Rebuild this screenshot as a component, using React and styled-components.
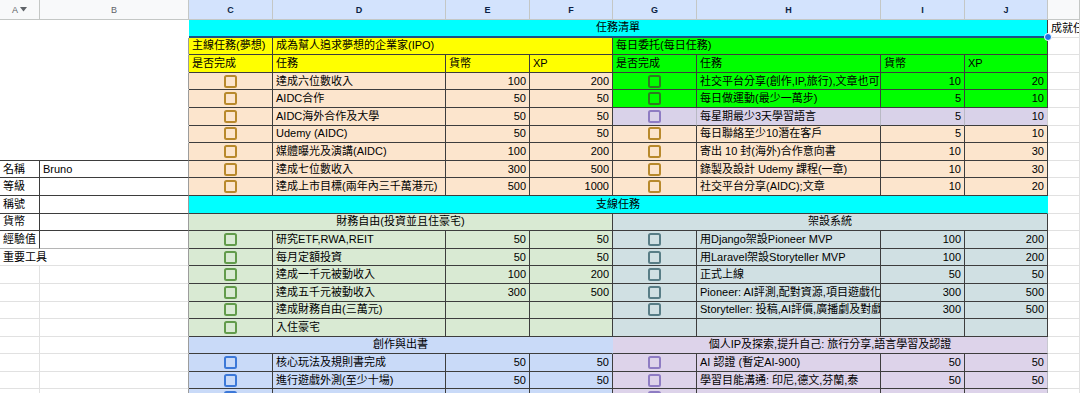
import React from 'react';
import styled, { createGlobalStyle } from 'styled-components';

const FONT = `"Liberation Sans", Arial, "Noto Sans CJK TC", sans-serif`;

const GlobalStyle = createGlobalStyle`
  html, body { margin: 0; padding: 0; background: #fff; overflow: hidden; }
  body { font-family: ${FONT}; }
`;

const CY = '#00ffff';
const YE = '#ffff00';
const GR = '#00ff00';
const PE = '#fce5cd';
const LV = '#d9d2e9';
const LG = '#d9ead3';
const TE = '#d0e0e3';
const BL = '#c9daf8';
const PU = '#ddd3ea';

const DK = '#3d3d3d';
const GL = '#e1e1e1';
const EDGE = '#9c9c9c';
const SOFT = '#b9b9c4';

const CK_PE = '#b8892c';
const CK_GR = '#2f7a22';
const CK_LV = '#8e7cc3';
const CK_LG = '#629b4b';
const CK_TE = '#587d86';
const CK_BL = '#3c78d8';
const CK_PU = '#8e7cc3';

const Sheet = styled.div`
  display: grid;
  grid-template-columns: 40px 149px 84px 173px 84px 83px 84px 184px 84px 83px 1fr;
  grid-template-rows: 20px;
  grid-auto-rows: 17.6px;
  width: 1080px;
  height: 393px;
  overflow: hidden;
  font-family: ${FONT};
  font-size: 11px;
  color: #000;
`;

const ColHead = styled.div`
  display: flex;
  align-items: center;
  justify-content: center;
  gap: 2px;
  box-sizing: border-box;
  background: ${p => (p.$sel ? '#d3e3fd' : '#f8f9fa')};
  color: ${p => (p.$sel ? '#0b1f45' : '#5f6368')};
  font-weight: ${p => (p.$sel ? 700 : 400)};
  font-size: 9px;
  border-right: 1px solid #c4c7c5;
  border-bottom: 1px solid #c4c7c5;
`;

const alignMap = { left: 'flex-start', center: 'center', right: 'flex-end' };

const Cell = styled.div`
  grid-column: span ${p => p.$span || 1};
  position: relative;
  box-sizing: border-box;
  display: flex;
  align-items: center;
  justify-content: ${p => alignMap[p.$align || 'left']};
  padding: 0 3px;
  background: ${p => p.$bg || '#fff'};
  border-right: ${p => (p.$sel ? 1 : 1)}px solid ${p => p.$br || 'transparent'};
  border-bottom: ${p => (p.$sel ? 2 : 1)}px solid ${p => p.$bb || 'transparent'};
  white-space: nowrap;
  overflow: ${p => (p.$sel ? 'visible' : 'hidden')};
  line-height: 1;
`;

const Check = styled.span`
  display: block;
  width: 13px;
  height: 13px;
  box-sizing: border-box;
  border: 2px solid ${p => p.$c};
  border-radius: 2.5px;
`;

const Handle = styled.span`
  position: absolute;
  right: -5px;
  bottom: -5px;
  width: 8px;
  height: 8px;
  border-radius: 50%;
  background: #1a73e8;
  border: 1px solid #fff;
  box-sizing: border-box;
  z-index: 2;
`;

const Caret = () => (
  <svg width="7" height="5" viewBox="0 0 7 5">
    <path d="M0 0 L7 0 L3.5 4.5 Z" fill="#5f6368" />
  </svg>
);

/* ---------- row builders ---------- */

const blank = r => ({
  s: 2,
  br: r === 1 ? 'transparent' : EDGE,
  bb: r === 8 ? DK : 'transparent',
});
const labelCells = (t, v = '', last = false) => [
  { t, br: DK, bb: last ? '#b5b5b5' : DK },
  { t: v, br: EDGE, bb: last ? '#b5b5b5' : DK },
];
const plainLeft = () => [
  { br: GL, bb: GL },
  { br: EDGE, bb: GL },
];
const kCell = (t = '') => ({ t, br: GL, bb: GL });

const task = (bg, chk, name, coin, xp, opts = {}) => {
  const b = opts.b || DK;
  return [
    { chk, bg, br: b, bb: opts.bb || DK, a: 'center' },
    { t: name, bg, br: b, bb: opts.bb || DK },
    { t: coin, bg, br: b, bb: opts.bb || DK, a: 'right' },
    { t: xp, bg, br: opts.last || b, bb: opts.bb || DK, a: 'right' },
  ];
};

const rows = [
  // 1
  [blank(1), { t: '任務清單', s: 8, bg: CY, a: 'center', sel: true, br: DK, bb: '#1d4f85' }, kCell('成就任務')],
  // 2
  [
    blank(2),
    { t: '主線任務(夢想)', bg: YE, br: DK, bb: DK },
    { t: '成為幫人追求夢想的企業家(IPO)', s: 3, bg: YE, br: DK, bb: DK },
    { t: '每日委托(每日任務)', s: 4, bg: GR, br: DK, bb: DK },
    kCell(),
  ],
  // 3
  [
    blank(3),
    { t: '是否完成', bg: YE, br: DK, bb: DK },
    { t: '任務', bg: YE, br: DK, bb: DK },
    { t: '貨幣', bg: YE, br: DK, bb: DK },
    { t: 'XP', bg: YE, br: DK, bb: DK },
    { t: '是否完成', bg: GR, br: DK, bb: DK },
    { t: '任務', bg: GR, br: DK, bb: DK },
    { t: '貨幣', bg: GR, br: DK, bb: DK },
    { t: 'XP', bg: GR, br: DK, bb: DK },
    kCell(),
  ],
  // 4
  [
    blank(4),
    ...task(PE, CK_PE, '達成六位數收入', '100', '200'),
    ...task(GR, CK_GR, '社交平台分享(創作,IP,旅行),文章也可', '10', '20'),
    kCell(),
  ],
  // 5
  [
    blank(5),
    ...task(PE, CK_PE, 'AIDC合作', '50', '50'),
    ...task(GR, CK_GR, '每日做運動(最少一萬步)', '5', '10'),
    kCell(),
  ],
  // 6
  [
    blank(6),
    ...task(PE, CK_PE, 'AIDC海外合作及大學', '50', '50'),
    ...task(LV, CK_LV, '每星期最少3天學習語言', '5', '10', { b: SOFT, last: '#d0d0d0' }),
    kCell(),
  ],
  // 7
  [
    blank(7),
    ...task(PE, CK_PE, 'Udemy (AIDC)', '50', '50'),
    ...task(PE, CK_PE, '每日聯絡至少10潛在客戶', '5', '10'),
    kCell(),
  ],
  // 8
  [
    blank(8),
    ...task(PE, CK_PE, '媒體曝光及演講(AIDC)', '100', '200'),
    ...task(PE, CK_PE, '寄出 10 封(海外)合作意向書', '10', '30'),
    kCell(),
  ],
  // 9
  [
    ...labelCells('名稱', 'Bruno'),
    ...task(PE, CK_PE, '達成七位數收入', '300', '500'),
    ...task(PE, CK_PE, '錄製及設計 Udemy 課程(一章)', '10', '30'),
    kCell(),
  ],
  // 10
  [
    ...labelCells('等級'),
    ...task(PE, CK_PE, '達成上市目標(兩年內三千萬港元)', '500', '1000'),
    ...task(PE, CK_PE, '社交平台分享(AIDC);文章', '10', '20'),
    kCell(),
  ],
  // 11
  [...labelCells('稱號'), { t: '支線任務', s: 8, bg: CY, a: 'center', bb: DK }, kCell()],
  // 12
  [
    ...labelCells('貨幣'),
    { t: '財務自由(投資並且住豪宅)', s: 4, bg: LG, a: 'center', br: DK, bb: DK },
    { t: '架設系統', s: 4, bg: TE, a: 'center', br: DK, bb: DK },
    kCell(),
  ],
  // 13
  [
    ...labelCells('經驗值', '', true),
    ...task(LG, CK_LG, '研究ETF,RWA,REIT', '50', '50'),
    ...task(TE, CK_TE, '用Django架設Pioneer MVP', '100', '200'),
    kCell(),
  ],
  // 14
  [
    { t: '重要工具', s: 2, br: EDGE, bb: GL },
    ...task(LG, CK_LG, '每月定額投資', '50', '50'),
    ...task(TE, CK_TE, '用Laravel架設Storyteller MVP', '100', '200'),
    kCell(),
  ],
  // 15
  [
    ...plainLeft(),
    ...task(LG, CK_LG, '達成一千元被動收入', '100', '200'),
    ...task(TE, CK_TE, '正式上線', '50', '50'),
    kCell(),
  ],
  // 16
  [
    ...plainLeft(),
    ...task(LG, CK_LG, '達成五千元被動收入', '300', '500'),
    ...task(TE, CK_TE, 'Pioneer: AI評測,配對資源,項目遊戲化', '300', '500'),
    kCell(),
  ],
  // 17
  [
    ...plainLeft(),
    ...task(LG, CK_LG, '達成財務自由(三萬元)', '', ''),
    ...task(TE, CK_TE, 'Storyteller: 投稿,AI評價,廣播劇及對戲', '300', '500'),
    kCell(),
  ],
  // 18
  [
    ...plainLeft(),
    ...task(LG, CK_LG, '入住豪宅', '', ''),
    ...task(TE, null, '', '', ''),
    kCell(),
  ],
  // 19
  [
    ...plainLeft(),
    { t: '創作與出書', s: 4, bg: BL, a: 'center', bb: DK },
    { t: '個人IP及探索,提升自己: 旅行分享,語言學習及認證', s: 4, bg: PU, a: 'center', bb: DK, br: '#c8c8d0' },
    kCell(),
  ],
  // 20
  [
    ...plainLeft(),
    ...task(BL, CK_BL, '核心玩法及規則書完成', '50', '50'),
    ...task(PU, CK_PU, 'AI 認證 (暫定AI-900)', '50', '50', { last: '#b5b5c0' }),
    kCell(),
  ],
  // 21
  [
    ...plainLeft(),
    ...task(BL, CK_BL, '進行遊戲外測(至少十場)', '50', '50'),
    ...task(PU, CK_PU, '學習目能溝通: 印尼,德文,芬蘭,泰', '50', '50', { last: '#b5b5c0' }),
    kCell(),
  ],
  // 22
  [
    ...plainLeft(),
    ...task(BL, CK_BL, '', '', ''),
    ...task(PU, CK_PU, '', '', '', { last: '#b5b5c0' }),
    kCell(),
  ],
];

const headers = [
  { l: 'A', caret: true },
  { l: 'B' },
  { l: 'C', sel: true },
  { l: 'D', sel: true },
  { l: 'E', sel: true },
  { l: 'F', sel: true },
  { l: 'G', sel: true },
  { l: 'H', sel: true },
  { l: 'I', sel: true },
  { l: 'J', sel: true },
  { l: '' },
];

export default function App() {
  return (
    <>
      <GlobalStyle />
      <Sheet>
        {headers.map(h => (
          <ColHead key={`h-${h.l || 'K'}`} $sel={h.sel}>
            {h.l}
            {h.caret && <Caret />}
          </ColHead>
        ))}
        {rows.map((row, ri) =>
          row.map((c, ci) => (
            <Cell
              key={`${ri}-${ci}`}
              $span={c.s}
              $bg={c.bg}
              $align={c.a}
              $br={c.br}
              $bb={c.bb}
              $sel={c.sel}
            >
              {c.chk ? <Check $c={c.chk} /> : c.t}
              {c.sel && <Handle />}
            </Cell>
          ))
        )}
      </Sheet>
    </>
  );
}
